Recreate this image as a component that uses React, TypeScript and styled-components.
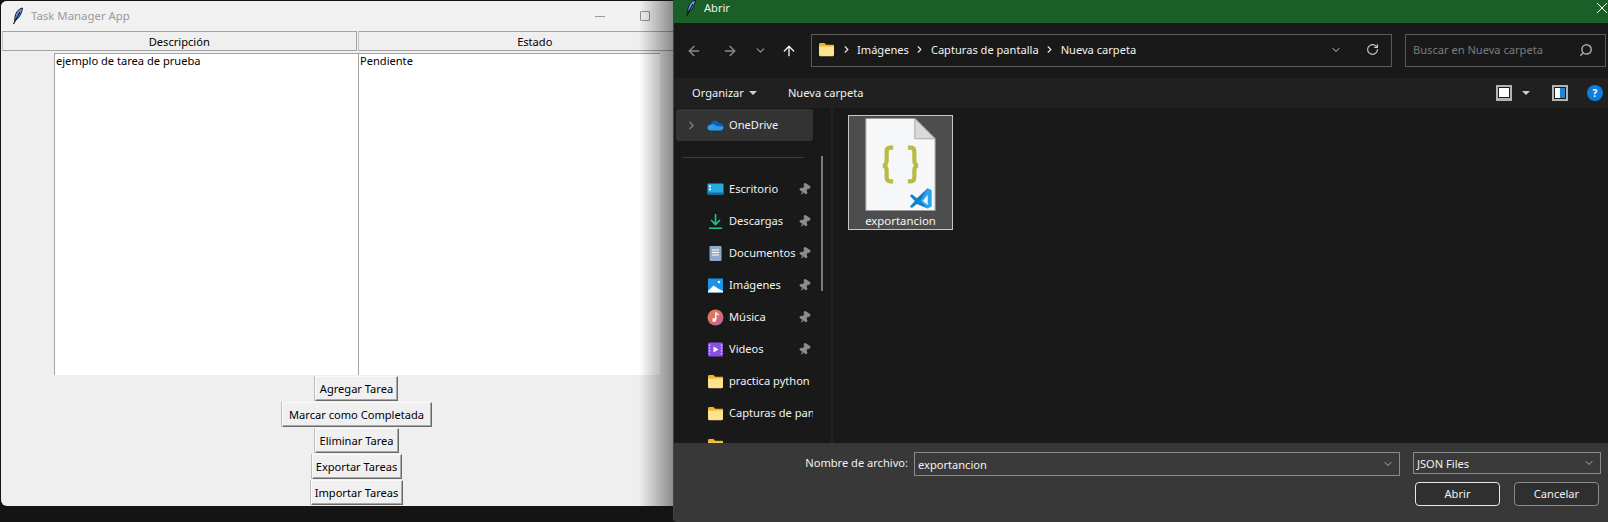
/**
 * Task Manager window with the "Abrir" file dialog next to it
 */
import * as React from 'react';
import styled, { createGlobalStyle } from 'styled-components';
import { ArrowLeft, ArrowRight, ArrowUp, ChevronDown, ChevronRight, RotateCw, Search, Pin } from 'lucide-react';

const FONT = '"Noto Sans", "Open Sans", "Liberation Sans", sans-serif';

const GlobalStyle = createGlobalStyle`
  html, body { margin: 0; padding: 0; background: #141414; }
  * { box-sizing: border-box; }
`;

const Desktop = styled.div`
  display: flex;
  align-items: flex-start;
  width: 1608px;
  height: 522px;
  overflow: hidden;
  background: #141414;
  font-family: ${FONT};
  font-size: 11.1px;
  white-space: nowrap;
`;

/* ---------- Tk window ---------- */

const TkWindow = styled.div`
  position: relative;
  flex: none;
  width: 672px;
  height: 505px;
  margin: 1px 0 0 1px;
  overflow: hidden;
  background: #efefef;
  border-radius: 6px 0 0 6px;

  &::after {
    content: '';
    position: absolute;
    top: 0;
    right: 0;
    bottom: 0;
    width: 34px;
    background: linear-gradient(to right, rgba(0, 0, 0, 0), rgba(0, 0, 0, 0.42));
  }
`;

const TkInner = styled.div`
  display: flex;
  flex-direction: column;
  width: 711px;
  height: 100%;
`;

const TkTitleBar = styled.div`
  display: flex;
  align-items: center;
  flex: none;
  height: 30px;
  padding-left: 11px;
  background: #f1f1f1;
`;

const TkTitle = styled.span`
  flex: 1;
  margin-left: 7px;
  padding-bottom: 2px;
  color: #9a9a9a;
  font-size: 11.4px;
`;

const CaptionButton = styled.span`
  display: flex;
  align-items: center;
  justify-content: center;
  width: 45px;
  height: 30px;
`;

const MinGlyph = styled.i`
  display: block;
  width: 10px;
  height: 1px;
  background: #9a9a9a;
`;

const MaxGlyph = styled.i`
  display: block;
  width: 10px;
  height: 10px;
  border: 1px solid #8f8f8f;
  border-radius: 1px;
`;

const HeaderRow = styled.div`
  display: flex;
  flex: none;
  height: 20px;
  margin-left: 1px;
  gap: 1px;
`;

const HeaderCell = styled.div`
  flex: 1;
  display: flex;
  align-items: center;
  justify-content: center;
  border: 1px solid #a3a3a3;
  border-left-color: #c4c4c4;
  color: #000;
  background: #efefef;
`;

const TreeRow = styled.div`
  display: flex;
  flex: none;
  height: 322px;
  margin: 2px 0 0 53px;
`;

const TreeCell = styled.div<{ $width: number }>`
  width: ${(p) => p.$width}px;
  padding: 0 0 0 1px;
  border-left: 1px solid #a3a3a3;
  border-top: 1px solid #a3a3a3;
  background: #fff;
  color: #000;
  line-height: 14px;
`;

const ButtonStack = styled.div`
  display: flex;
  flex-direction: column;
  align-items: center;
  gap: 1px;
  padding-top: 1px;
`;

const TkButton = styled.div<{ $width: number }>`
  display: flex;
  align-items: center;
  justify-content: center;
  width: ${(p) => p.$width}px;
  height: 25px;
  border: 1px solid;
  border-color: #fbfbfb #6b6b6b #6b6b6b #fbfbfb;
  box-shadow: inset -1px -1px 0 #a8a8a8, -1px 0 0 #bdbdbd;
  color: #000;
  background: #f0f0f0;
`;

/* ---------- file dialog ---------- */

const Dialog = styled.div`
  flex: none;
  display: flex;
  flex-direction: column;
  width: 935px;
  height: 522px;
  overflow: hidden;
  border-left: 1px solid #1a5e28;
  border-bottom-left-radius: 4px;
  background: #191919;
  color: #f2f2f2;
`;

const DialogTitle = styled.div`
  display: flex;
  align-items: center;
  flex: none;
  height: 23px;
  padding: 0 0 8px 11px;
  background: #1a5e28;
`;

const DialogTitleText = styled.span`
  flex: 1;
  margin-left: 7px;
`;

const CloseBox = styled.span`
  display: flex;
  width: 10px;
  transform: translate(-1px, 0);
`;

const NavBar = styled.div`
  display: flex;
  align-items: center;
  flex: none;
  height: 55px;
  padding-left: 2px;
  background: #191919;
`;

const NavSlot = styled.span<{ $width: number; $color: string }>`
  display: flex;
  align-items: center;
  justify-content: center;
  width: ${(p) => p.$width}px;
  color: ${(p) => p.$color};
`;

const PathBox = styled.div`
  display: flex;
  align-items: center;
  flex: none;
  width: 581px;
  height: 33px;
  margin-left: 5px;
  padding: 0 12px 2px 6px;
  border: 1px solid #5a5a5a;
`;

const PathPart = styled.span`
  color: #f2f2f2;
`;

const PathSep = styled.span`
  display: flex;
  width: 22px;
  justify-content: center;
  color: #e6e6e6;
`;

const PathSpacer = styled.span`
  flex: 1;
`;

const PathEnd = styled.span<{ $gap: number }>`
  display: flex;
  margin-left: ${(p) => p.$gap}px;
  color: #cfcfcf;
`;

const SearchBox = styled.div`
  display: flex;
  align-items: center;
  justify-content: space-between;
  flex: none;
  width: 201px;
  height: 33px;
  margin-left: 13px;
  padding: 0 12px 2px 7px;
  border: 1px solid #5a5a5a;
  color: #7c7c7c;
`;

const ToolBar = styled.div`
  display: flex;
  align-items: center;
  flex: none;
  height: 30px;
  padding-left: 18px;
  background: #202020;
`;

const ToolText = styled.span<{ $left?: number }>`
  margin-left: ${(p) => p.$left ?? 0}px;
  padding-bottom: 2px;
  color: #f2f2f2;
`;

const Caret = styled.i<{ $left: number }>`
  display: block;
  width: 0;
  height: 0;
  margin-left: ${(p) => p.$left}px;
  border-left: 4px solid transparent;
  border-right: 4px solid transparent;
  border-top: 4px solid #cfcfcf;
`;

const ToolSpacer = styled.span`
  flex: 1;
`;

const ToolIcons = styled.div`
  display: flex;
  align-items: center;
  padding-right: 5px;
`;

const ViewIcon = styled.span`
  display: block;
  width: 16px;
  height: 16px;
  border: 2px solid #b4b4b4;
  border-bottom-width: 3px;
  box-shadow: inset 0 0 0 1px #1a1a1a;
  background: #fff;
`;

const PaneIcon = styled.span`
  display: block;
  width: 16px;
  height: 16px;
  margin-left: 22px;
  border: 2px solid #b4b4b4;
  box-shadow: inset 0 0 0 1px #1a1a1a;
  background: linear-gradient(to right, #fff 50%, #1b86d8 50%);
`;

const HelpIcon = styled.span`
  display: flex;
  align-items: center;
  justify-content: center;
  width: 16px;
  height: 16px;
  margin-left: 19px;
  border-radius: 50%;
  background: #0c7ddb;
  color: #fff;
  font-size: 10px;
  font-weight: 700;
`;

const DialogBody = styled.div`
  display: flex;
  flex: none;
  height: 335px;
  overflow: hidden;
`;

const Sidebar = styled.div`
  position: relative;
  flex: none;
  width: 159px;
  padding: 1px 0 0 2px;
  border-right: 2px solid #232323;
`;

const SideThumb = styled.span`
  position: absolute;
  top: 48px;
  left: 147px;
  width: 2px;
  height: 135px;
  background: #7b7b7b;
`;

const SideRow = styled.div<{ $active?: boolean }>`
  display: flex;
  align-items: center;
  width: 137px;
  height: 32px;
  padding-left: ${(p) => (p.$active ? 9 : 31)}px;
  border-radius: 3px;
  overflow: hidden;
  background: ${(p) => (p.$active ? '#333' : 'transparent')};
`;

const SideIcon = styled.span`
  display: flex;
  flex: none;
  width: 17px;
  height: 17px;
  margin-right: 5px;
`;

const SideLabel = styled.span`
  flex: 1;
  padding-bottom: 2px;
  overflow: hidden;
  color: #f2f2f2;
`;

const SideChevron = styled.span`
  display: flex;
  width: 22px;
  color: #7d7d7d;
`;

const SidePin = styled.span`
  display: flex;
  flex: none;
  width: 13px;
  margin-right: 2px;
  color: #8c8c8c;
`;

const SideDivider = styled.hr`
  width: 121px;
  height: 1px;
  margin: 16px 0 15px 7px;
  border: 0;
  background: #3c3c3c;
`;

const FileArea = styled.div`
  flex: 1;
  padding: 7px 0 0 15px;
`;

const FileTile = styled.div`
  display: flex;
  flex-direction: column;
  align-items: center;
  width: 105px;
  height: 115px;
  padding-top: 2px;
  border: 1px solid #c6c6c6;
  background: #4d4d4d;
`;

const FileName = styled.span`
  margin-top: 2px;
  line-height: 16px;
  color: #f5f5f5;
  font-size: 11.4px;
`;

const Footer = styled.div`
  flex: 1;
  display: flex;
  flex-direction: column;
  padding: 9px 7px 0 0;
  background: #383838;
`;

const FooterRow = styled.div<{ $top?: number; $right?: number }>`
  display: flex;
  align-items: flex-start;
  justify-content: flex-end;
  margin-top: ${(p) => p.$top ?? 0}px;
  margin-right: ${(p) => p.$right ?? 0}px;
`;

const FileLabel = styled.span`
  line-height: 22px;
  margin-right: 6px;
`;

const Field = styled.div<{ $width: number; $height: number; $left?: number }>`
  display: flex;
  align-items: center;
  justify-content: space-between;
  width: ${(p) => p.$width}px;
  height: ${(p) => p.$height}px;
  margin-left: ${(p) => p.$left ?? 0}px;
  padding: 0 5px 0 3px;
  border: 1px solid #8a8a8a;
  background: #3a3a3a;
`;

const FieldChevron = styled.span`
  display: flex;
  color: #b0b0b0;
`;

const DialogButton = styled.div<{ $primary?: boolean; $left?: number }>`
  display: flex;
  align-items: center;
  justify-content: center;
  width: 85px;
  height: 24px;
  margin-left: ${(p) => p.$left ?? 0}px;
  padding-bottom: 1px;
  border: 1px solid ${(p) => (p.$primary ? '#e8e8e8' : '#8a8a8a')};
  border-radius: 4px;
  background: #2f2f2f;
`;

/* ---------- drawings ---------- */

const Feather = () => (
  <svg width="12" height="18" viewBox="0 0 12 18" style={{ flex: 'none' }}>
    <path d="M10.5 1C6 2 3.2 6 2.8 11.5L2.6 13.5C6 12.5 9.5 8 10.5 1Z" fill="#5d9cec" stroke="#0a0a0a" strokeWidth="0.9" />
    <path d="M8 5L1.5 17" stroke="#111" strokeWidth="1.1" />
  </svg>
);

const FolderIcon = ({ w = 17 }: { w?: number }) => (
  <svg width={w} height={w} viewBox="0 0 17 17">
    <path d="M1 3.5C1 2.7 1.6 2 2.4 2H6.4L8.2 3.8H15C15.6 3.8 16 4.2 16 4.8V6H1Z" fill="#f0b429" />
    <path d="M1 5.6H16V14C16 14.7 15.4 15.2 14.8 15.2H2.2C1.6 15.2 1 14.7 1 14Z" fill="#fde48a" />
  </svg>
);

const CloudIcon = () => (
  <svg width="17" height="17" viewBox="0 0 17 17">
    <path d="M4 6.5C4.6 4.5 6.2 3.5 8 3.5C9.6 3.5 11 4.4 11.6 5.8C14 5.8 16 7 16.4 9.5H6.5L3.5 8Z" fill="#0a5fb8" />
    <path d="M3.6 13.5C1.8 13.5 0.5 12.3 0.5 10.7C0.5 9 2 7.7 3.8 7.8C5 6.8 7 6.8 8.2 8C9 9.2 10 9.4 11 9.2H16.5C16.7 11.5 15.6 13.5 13.6 13.5Z" fill="#2a9cf0" />
  </svg>
);

const DesktopIcon = () => (
  <svg width="17" height="17" viewBox="0 0 17 17">
    <rect x="0.5" y="2.5" width="16" height="11" rx="1" fill="#28a8de" />
    <rect x="0.5" y="11.5" width="16" height="2" fill="#0e6fa8" />
    <rect x="2" y="4.5" width="2" height="1.6" fill="#fff" />
    <rect x="2" y="7.5" width="2" height="1.6" fill="#fff" />
  </svg>
);

const DownloadIcon = () => (
  <svg width="17" height="17" viewBox="0 0 17 17" fill="none" stroke="#1fc39a" strokeWidth="1.6">
    <path d="M8.5 1V11M4 7L8.5 11.5L13 7" />
    <path d="M2 15.2H15" />
  </svg>
);

const DocIcon = () => (
  <svg width="17" height="17" viewBox="0 0 17 17">
    <rect x="2.5" y="1" width="12" height="15" rx="1" fill="#8fa9c9" />
    <path d="M5 5H12M5 7.5H12M5 10H12" stroke="#fff" strokeWidth="1.1" />
  </svg>
);

const PictureIcon = () => (
  <svg width="17" height="17" viewBox="0 0 17 17">
    <rect x="1" y="1.5" width="15" height="14" fill="#1c93e8" />
    <path d="M1 14L6.5 8.5L11 11.5L16 14V15.5H1Z" fill="#fff" />
    <circle cx="12" cy="5" r="1.3" fill="#fff" />
  </svg>
);

const MusicIcon = () => (
  <svg width="17" height="17" viewBox="0 0 17 17">
    <defs>
      <linearGradient id="mus" x1="0" y1="0" x2="1" y2="1">
        <stop offset="0" stopColor="#e8803f" />
        <stop offset="1" stopColor="#c45fa0" />
      </linearGradient>
    </defs>
    <circle cx="8.5" cy="8.5" r="8" fill="url(#mus)" />
    <path d="M8.8 3.5V10.6" stroke="#fff" strokeWidth="1.4" />
    <path d="M8.8 3.5C9.5 5 11 5 11.5 6" stroke="#fff" strokeWidth="1.2" fill="none" />
    <circle cx="7.2" cy="11" r="1.9" fill="#fff" />
  </svg>
);

const VideoIcon = () => (
  <svg width="17" height="17" viewBox="0 0 17 17">
    <rect x="1" y="1.5" width="15" height="14" rx="1.5" fill="#8a4fe0" />
    <path d="M6.5 5.5V11.5L11.5 8.5Z" fill="#fff" />
    <path d="M2.5 3.5V13.5M14.5 3.5V13.5" stroke="#d9c4fa" strokeWidth="1.4" strokeDasharray="1.4 1.4" />
  </svg>
);

const JsonFileIcon = () => (
  <svg width="71" height="94" viewBox="0 0 71 94">
    <path d="M0.5 0.5H50L70.5 21V93.5H0.5Z" fill="#f5f7f8" stroke="#9d9d9d" />
    <path d="M50 0.5V21H70.5Z" fill="#d9d9d9" stroke="#a8a8a8" />
    <path
      d="M28 30H25C22.5 30 21.5 31.5 21.5 34V43C21.5 46 20.5 47.5 18 48C20.5 48.5 21.5 50 21.5 53V60C21.5 62.5 22.5 64 25 64H28"
      fill="none"
      stroke="#b9bb44"
      strokeWidth="4.2"
    />
    <path
      d="M43 30H46C48.5 30 49.5 31.5 49.5 34V43C49.5 46 50.5 47.5 53 48C50.5 48.5 49.5 50 49.5 53V60C49.5 62.5 48.5 64 46 64H43"
      fill="none"
      stroke="#b9bb44"
      strokeWidth="4.2"
    />
    <path d="M63 71L52 81L47 77L45 78.5L50 84L45 89.5L47 91L52 87L63 91.5Z" fill="#0f7fcc" />
    <path d="M63 71L67 73V89.5L63 91.5L55.5 84Z" fill="#2aa4ee" />
    <path d="M63 77.5L58 84L63 88Z" fill="#f5f7f8" />
  </svg>
);

const sideItems = [
  { label: 'Escritorio', icon: <DesktopIcon />, pinned: true },
  { label: 'Descargas', icon: <DownloadIcon />, pinned: true },
  { label: 'Documentos', icon: <DocIcon />, pinned: true },
  { label: 'Imágenes', icon: <PictureIcon />, pinned: true },
  { label: 'Música', icon: <MusicIcon />, pinned: true },
  { label: 'Videos', icon: <VideoIcon />, pinned: true },
  { label: 'practica python', icon: <FolderIcon /> },
  { label: 'Capturas de pantalla', icon: <FolderIcon /> },
  { label: '', icon: <FolderIcon /> },
];

const taskButtons = [
  { label: 'Agregar Tarea', width: 83 },
  { label: 'Marcar como Completada', width: 150 },
  { label: 'Eliminar Tarea', width: 84 },
  { label: 'Exportar Tareas', width: 90 },
  { label: 'Importar Tareas', width: 92 },
];

const App = () => {
  return (
    <Desktop>
      <GlobalStyle />
      <TkWindow>
        <TkInner>
          <TkTitleBar>
            <Feather />
            <TkTitle>Task Manager App</TkTitle>
            <CaptionButton>
              <MinGlyph />
            </CaptionButton>
            <CaptionButton>
              <MaxGlyph />
            </CaptionButton>
            <CaptionButton />
          </TkTitleBar>
          <HeaderRow>
            <HeaderCell>Descripción</HeaderCell>
            <HeaderCell>Estado</HeaderCell>
          </HeaderRow>
          <TreeRow>
            <TreeCell $width={304}>ejemplo de tarea de prueba</TreeCell>
            <TreeCell $width={302}>Pendiente</TreeCell>
          </TreeRow>
          <ButtonStack>
            {taskButtons.map((b) => (
              <TkButton key={b.label} $width={b.width}>
                {b.label}
              </TkButton>
            ))}
          </ButtonStack>
        </TkInner>
      </TkWindow>

      <Dialog>
        <DialogTitle>
          <Feather />
          <DialogTitleText>Abrir</DialogTitleText>
          <CloseBox>
            <svg width="10" height="10" viewBox="0 0 10 10" stroke="#fff" strokeWidth="1">
              <path d="M0 0L10 10M10 0L0 10" />
            </svg>
          </CloseBox>
        </DialogTitle>

        <NavBar>
          <NavSlot $width={36} $color="#8c8c8c">
            <ArrowLeft size={16} />
          </NavSlot>
          <NavSlot $width={36} $color="#8c8c8c">
            <ArrowRight size={16} />
          </NavSlot>
          <NavSlot $width={24} $color="#8c8c8c">
            <ChevronDown size={13} strokeWidth={2.5} />
          </NavSlot>
          <NavSlot $width={34} $color="#f2f2f2">
            <ArrowUp size={16} />
          </NavSlot>
          <PathBox>
            <FolderIcon />
            <PathSep>
              <ChevronRight size={11} strokeWidth={2.5} />
            </PathSep>
            <PathPart>Imágenes</PathPart>
            <PathSep>
              <ChevronRight size={11} strokeWidth={2.5} />
            </PathSep>
            <PathPart>Capturas de pantalla</PathPart>
            <PathSep>
              <ChevronRight size={11} strokeWidth={2.5} />
            </PathSep>
            <PathPart>Nueva carpeta</PathPart>
            <PathSpacer />
            <PathEnd $gap={0}>
              <ChevronDown size={12} />
            </PathEnd>
            <PathEnd $gap={24}>
              <RotateCw size={13} />
            </PathEnd>
          </PathBox>
          <SearchBox>
            Buscar en Nueva carpeta
            <Search size={14} strokeWidth={2.5} color="#a8a8a8" style={{ transform: 'scaleX(-1)' }} />
          </SearchBox>
        </NavBar>

        <ToolBar>
          <ToolText>Organizar</ToolText>
          <Caret $left={5} />
          <ToolText $left={31}>Nueva carpeta</ToolText>
          <ToolSpacer />
          <ToolIcons>
            <ViewIcon />
            <Caret $left={10} />
            <PaneIcon />
            <HelpIcon>?</HelpIcon>
          </ToolIcons>
        </ToolBar>

        <DialogBody>
          <Sidebar>
            <SideThumb />
            <SideRow $active>
              <SideChevron>
                <ChevronRight size={13} strokeWidth={2.5} />
              </SideChevron>
              <SideIcon>
                <CloudIcon />
              </SideIcon>
              <SideLabel>OneDrive</SideLabel>
            </SideRow>
            <SideDivider />
            {sideItems.map((item, i) => (
              <SideRow key={i}>
                <SideIcon>{item.icon}</SideIcon>
                <SideLabel>{item.label}</SideLabel>
                {item.pinned && (
                  <SidePin>
                    <Pin size={13} fill="currentColor" style={{ transform: 'rotate(35deg)' }} />
                  </SidePin>
                )}
              </SideRow>
            ))}
          </Sidebar>
          <FileArea>
            <FileTile>
              <JsonFileIcon />
              <FileName>exportancion</FileName>
            </FileTile>
          </FileArea>
        </DialogBody>

        <Footer>
          <FooterRow>
            <FileLabel>Nombre de archivo:</FileLabel>
            <Field $width={486} $height={24}>
              exportancion
              <FieldChevron>
                <ChevronDown size={12} />
              </FieldChevron>
            </Field>
            <Field $width={188} $height={22} $left={13}>
              JSON Files
              <FieldChevron>
                <ChevronDown size={12} />
              </FieldChevron>
            </Field>
          </FooterRow>
          <FooterRow $top={6} $right={2}>
            <DialogButton $primary>Abrir</DialogButton>
            <DialogButton $left={14}>Cancelar</DialogButton>
          </FooterRow>
        </Footer>
      </Dialog>
    </Desktop>
  );
};

export default App;
